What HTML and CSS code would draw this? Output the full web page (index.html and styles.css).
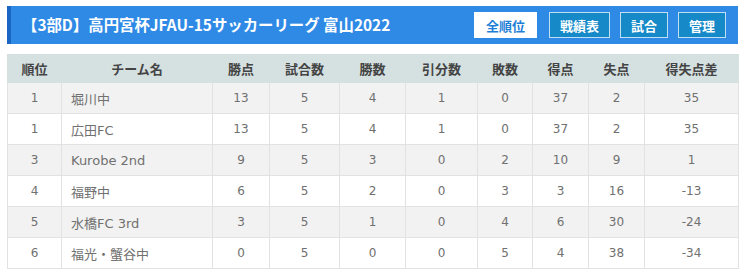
FILE: index.html
```html
<!DOCTYPE html>
<html lang="ja">
<head>
<meta charset="utf-8">
<title>順位表</title>
<link rel="stylesheet" href="styles.css">
</head>
<body>
<div class="page">
  <div class="bar">
    <h1 class="title">【3部D】高円宮杯JFAU-15サッカーリーグ 富山2022</h1>
    <nav class="tabs">
      <a class="btn active">全順位</a>
      <a class="btn">戦績表</a>
      <a class="btn">試合</a>
      <a class="btn">管理</a>
    </nav>
  </div>
  <table class="standings">
    <colgroup>
      <col class="c-rank"><col class="c-team"><col class="c-pts"><col class="c-gp"><col class="c-w"><col class="c-d"><col class="c-l"><col class="c-gf"><col class="c-ga"><col class="c-gd">
    </colgroup>
    <thead>
      <tr><th>順位</th><th>チーム名</th><th>勝点</th><th>試合数</th><th>勝数</th><th>引分数</th><th>敗数</th><th>得点</th><th>失点</th><th>得失点差</th></tr>
    </thead>
    <tbody>
      <tr><td>1</td><td class="team">堀川中</td><td>13</td><td>5</td><td>4</td><td>1</td><td>0</td><td>37</td><td>2</td><td>35</td></tr>
      <tr><td>1</td><td class="team">広田FC</td><td>13</td><td>5</td><td>4</td><td>1</td><td>0</td><td>37</td><td>2</td><td>35</td></tr>
      <tr><td>3</td><td class="team">Kurobe 2nd</td><td>9</td><td>5</td><td>3</td><td>0</td><td>2</td><td>10</td><td>9</td><td>1</td></tr>
      <tr><td>4</td><td class="team">福野中</td><td>6</td><td>5</td><td>2</td><td>0</td><td>3</td><td>3</td><td>16</td><td>-13</td></tr>
      <tr><td>5</td><td class="team">水橋FC 3rd</td><td>3</td><td>5</td><td>1</td><td>0</td><td>4</td><td>6</td><td>30</td><td>-24</td></tr>
      <tr><td>6</td><td class="team">福光・蟹谷中</td><td>0</td><td>5</td><td>0</td><td>0</td><td>5</td><td>4</td><td>38</td><td>-34</td></tr>
    </tbody>
  </table>
</div>
</body>
</html>
```
FILE: styles.css
```css
html, body {
  margin: 0;
  padding: 0;
  background: #ffffff;
}
.page {
  padding: 6px 5px 0 7px;
  font-family: "DejaVu Sans", "Noto Sans CJK JP", sans-serif;
}
.bar {
  display: flex;
  align-items: center;
  justify-content: space-between;
  height: 38px;
  background: #2f8ae6;
  border-left: 4px solid #1a66c2;
  padding: 0 12px 0 11px;
}
.title {
  margin: 0;
  color: #ffffff;
  font-family: "Noto Sans CJK JP", sans-serif;
  font-size: 15.4px;
  font-weight: 700;
  line-height: 1;
}
.tabs {
  display: flex;
  gap: 10px;
}
.btn {
  display: flex;
  align-items: center;
  justify-content: center;
  height: 24px;
  padding: 0 10px;
  border: 1px solid #bfe0f2;
  background: #1689c8;
  color: #ffffff;
  font-family: "Noto Sans CJK JP", sans-serif;
  font-size: 13px;
  font-weight: 700;
}
.btn.active {
  background: #ffffff;
  color: #1f7fd6;
  border-color: #ffffff;
  padding: 0 11px;
  margin-right: 2px;
}
.standings {
  margin-top: 10px;
  width: 731px;
  table-layout: fixed;
  border-collapse: collapse;
  border: 1px solid #e4e4e4;
  color: #707070;
  font-size: 12px;
}
.c-rank { width: 54px; }
.c-team { width: 151px; }
.c-pts { width: 57px; }
.c-gp { width: 70px; }
.c-w { width: 66px; }
.c-d { width: 72px; }
.c-l { width: 55px; }
.c-gf { width: 56px; }
.c-ga { width: 56px; }
.c-gd { width: 94px; }
.standings th {
  height: 27px;
  padding: 0;
  background: #d5e0e0;
  color: #444444;
  font-family: "Noto Sans CJK JP", sans-serif;
  font-size: 13px;
  font-weight: 700;
  text-align: center;
  border: 1px solid #d5e0e0;
}
.standings td {
  height: 30px;
  padding: 0;
  text-align: center;
  border: 1px solid #e2e2e2;
  font-size: 12px;
}
.standings td.team {
  text-align: left;
  padding-left: 9px;
  font-size: 13px;
}
.standings tbody tr:nth-child(odd) td {
  background: #f2f2f2;
}
.standings tbody tr:nth-child(even) td {
  background: #ffffff;
}
```
